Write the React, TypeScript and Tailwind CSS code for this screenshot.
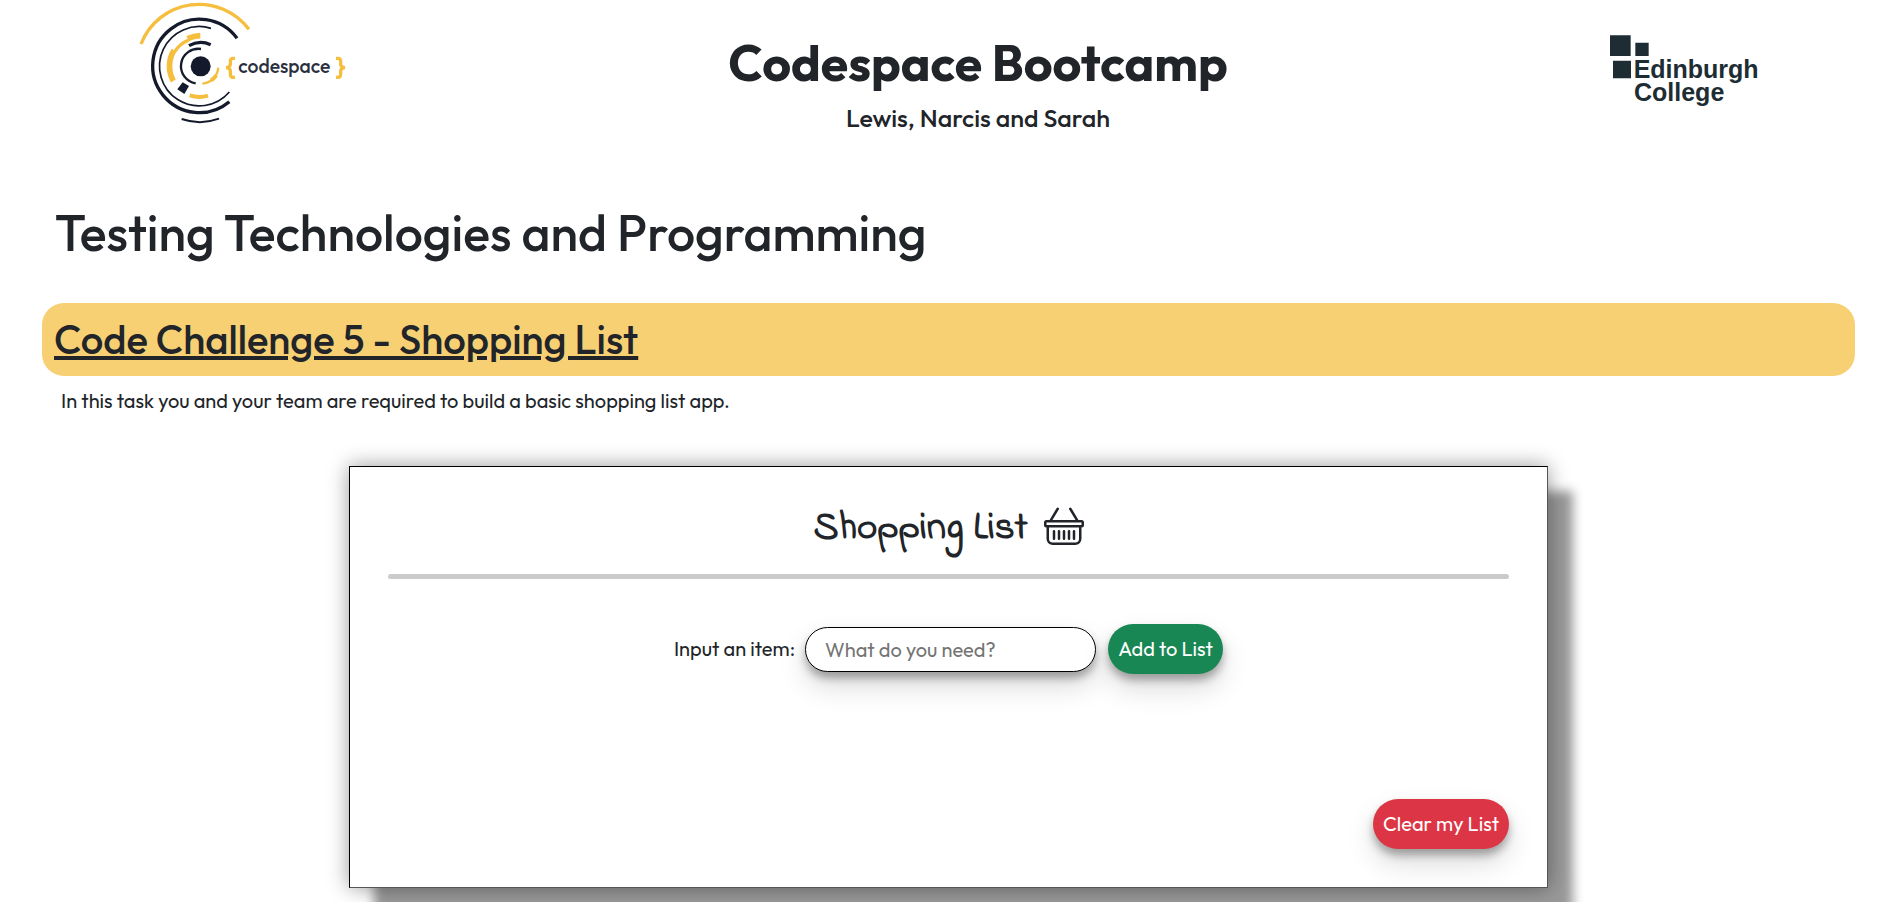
import { useState } from "react";
import type { FormEvent } from "react";
import { BsBasket } from "react-icons/bs";

function CodespaceLogo() {
  return (
    <svg viewBox="57 0 621 378" className="h-[126px] w-[207px] shrink-0" role="img" aria-label="codespace">
      <g fill="none" stroke="#f6be3d">
        <path d="M63 132A187 187 0 0 1 387 88" strokeWidth="10" />
        <path d="M241 107A91 91 0 0 0 203 116" strokeWidth="17" />
        <path d="M206 120A88 88 0 0 0 165 154" strokeWidth="10" />
        <path d="M162 151A91 91 0 0 0 160 243" strokeWidth="17" />
        <path d="M295 203A53 53 0 0 1 247 251" strokeWidth="7" />
        <path d="M289 226A53 53 0 0 1 273 241" strokeWidth="12" />
        <path d="M209 286A93 93 0 0 0 264 287" strokeWidth="12" />
        <path d="M345 175h-6q-8 0-8 9v9q0 9-13 10q13 1 13 10v9q0 10 8 10h6" strokeWidth="10" />
        <path d="M648 175h6q8 0 8 9v9q0 9 13 10q-13 1-13 10v9q0 10-8 10h-6" strokeWidth="10" />
      </g>
      <g fill="none" stroke="#141a2b">
        <path d="M351 115A140 140 0 1 0 328 305" strokeWidth="10" />
        <path d="M273 85A119 119 0 1 0 328 276" strokeWidth="5" />
        <path d="M207 137A71 71 0 0 1 272 134" strokeWidth="10" />
        <path d="M243 147A52 52 0 0 0 227 250" strokeWidth="7" />
        <path d="M185 357A168 168 0 0 0 297 356" strokeWidth="6" />
      </g>
      <circle cx="242" cy="199" r="30" fill="#141a2b" />
      <path d="M188 247L207 258L193 282L172 268Z" fill="#141a2b" />
      <text x="355" y="220" fontSize="58" className="fill-[#2a3040] font-[Outfit,sans-serif] font-medium">
        codespace
      </text>
    </svg>
  );
}

function EdinburghLogo() {
  return (
    <svg viewBox="60 44 450 213" className="h-[71px] w-[150px] shrink-0" role="img" aria-label="Edinburgh College">
      <g fill="#1d2d33">
        <path d="M60 45h62v62h-62zM136 67h40v40h-40zM69 121h54v53h-54z" />
        <text fontSize="75" className="font-['Liberation_Sans',Arial,sans-serif] font-bold">
          <tspan x="131" y="174">Edinburgh</tspan>
          <tspan x="132" y="242">College</tspan>
        </text>
      </g>
    </svg>
  );
}

const pill =
  "h-[50px] rounded-[25px] text-xl text-white shadow-[0_14px_28px_rgba(0,0,0,0.15),0_6px_8px_rgba(0,0,0,0.3)]";

export default function App() {
  const [item, setItem] = useState("");
  const [items, setItems] = useState<string[]>([]);

  const addItem = (event: FormEvent) => {
    event.preventDefault();
    if (!item.trim()) return;
    setItems([...items, item.trim()]);
    setItem("");
  };

  return (
    <div className="overflow-x-hidden bg-white pb-10 font-[Outfit,Lato,sans-serif] text-[#212529]">
      <header className="flex items-start justify-between pr-[137px] pl-[139px]">
        <CodespaceLogo />
        <div className="pt-[31px] text-center">
          <h1 className="text-[50px] leading-[64px] font-bold">Codespace Bootcamp</h1>
          <p className="mt-2 text-[25px] leading-[30px] font-medium">Lewis, Narcis and Sarah</p>
        </div>
        <div className="pt-[35px]">
          <EdinburghLogo />
        </div>
      </header>

      <main className="px-[42px]">
        <h2 className="mt-[68px] pl-[13px] text-[50px] leading-[64px] font-medium">
          Testing Technologies and Programming
        </h2>
        <section>
          <h3 className="mt-[38px] rounded-[22px] bg-[#f8d074] px-3 pt-3 pb-[13px] text-[40px] leading-[48px] font-medium underline">
            Code Challenge 5 - Shopping List
          </h3>
          <p className="mt-[10px] pl-[19px] text-xl leading-[30px]">
            In this task you and your team are required to build a basic shopping list app.
          </p>
        </section>

        <section className="mx-auto mt-[50px] flex min-h-[422px] max-w-[1199px] flex-col border border-t-black border-r-[#555] border-b-[#555] border-l-black bg-white p-[38px] shadow-[0_0_20px_rgba(0,0,0,0.4),25px_25px_10px_rgba(0,0,0,0.4)]">
          <h2 className="flex items-start justify-center gap-4 font-['Indie_Flower',cursive] text-[39px] leading-[48px] font-bold">
            Shopping List
            <BsBasket aria-hidden="true" className="size-10" />
          </h2>
          <hr className="mt-[21px] h-[5px] rounded-[3px] border-0 bg-[#cbcbcb]" />
          <form onSubmit={addItem} className="mt-[45px] flex items-center justify-center">
            <label htmlFor="item" className="text-xl">
              Input an item:
            </label>
            <input
              id="item"
              value={item}
              onChange={(event) => setItem(event.target.value)}
              placeholder="What do you need?"
              className="ml-[10px] h-[45px] w-[291px] rounded-[23px] border border-black bg-white px-[19px] text-xl shadow-[0_14px_28px_rgba(0,0,0,0.15),0_6px_8px_rgba(0,0,0,0.3)] placeholder:text-[#757575]"
            />
            <button type="submit" className={`${pill} ml-3 w-[115px] bg-[#198754]`}>
              Add to List
            </button>
          </form>
          <ul className="text-xl">
            {items.map((entry, index) => (
              <li key={index}>{entry}</li>
            ))}
          </ul>
          <button type="button" onClick={() => setItems([])} className={`${pill} mt-auto w-[136px] self-end bg-[#dc3545]`}>
            Clear my List
          </button>
        </section>
      </main>
    </div>
  );
}
